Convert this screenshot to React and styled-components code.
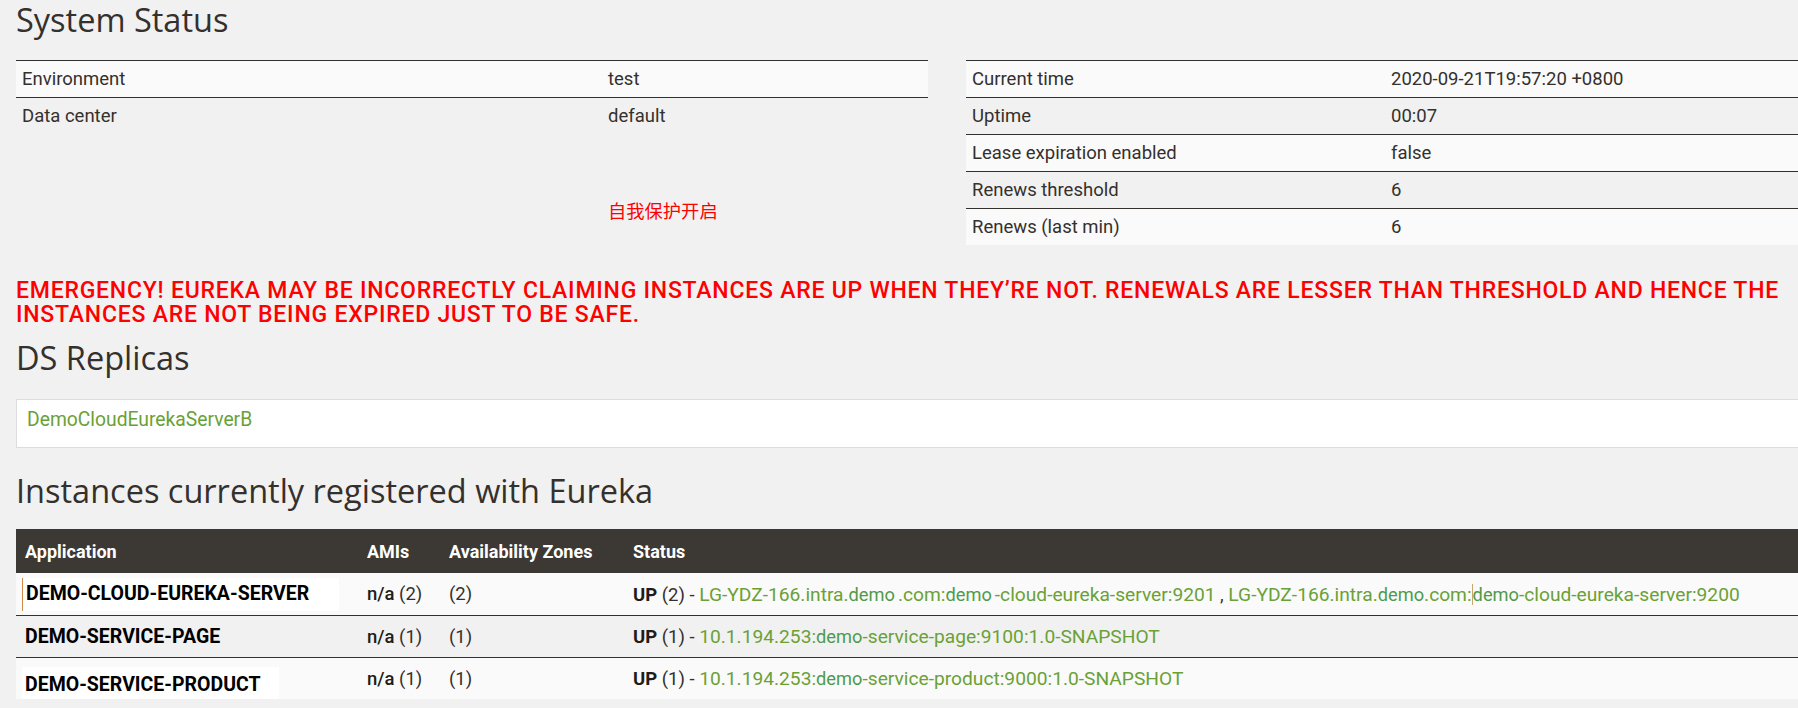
import React from "react"
import styled, { createGlobalStyle } from "styled-components"

const C = {
	page: "#f1f1f1",
	stripe: "#fafafa",
	text: "#34302d",
	head: "#3c3834",
	line: "#34302d",
	link: "#6aa136",
	red: "#ff0000",
}

const GlobalStyle = createGlobalStyle`
	html, body {
		margin: 0;
		padding: 0;
		background: ${C.page};
		overflow: hidden;
	}
	body {
		font-family: Roboto, "Liberation Sans", sans-serif;
		font-size: 18.5px;
		color: ${C.text};
	}
`

const Page = styled.div`
	padding: 3px 0 0 16px;
`

const Heading = styled.h2`
	margin: ${p => p.$top || 0}px 0 ${p => p.$bottom || 0}px 0;
	font-family: "Open Sans", "Liberation Sans", sans-serif;
	font-size: 32.5px;
	font-weight: 400;
	line-height: 34px;
	color: ${C.text};
`

const StatusGrid = styled.div`
	display: grid;
	grid-template-columns: 912px 1fr;
	column-gap: 38px;
	align-items: start;
`

const InfoTable = styled.div`
	display: flex;
	flex-direction: column;
`

const InfoRow = styled.div`
	display: grid;
	grid-template-columns: ${p => p.$label}px 1fr;
	align-items: center;
	height: 37px;
	box-sizing: border-box;
	border-top: 1px solid ${C.line};
	&:nth-child(odd) {
		background: ${C.stripe};
	}
`

const Cell = styled.div`
	padding: 0 6px;
	white-space: nowrap;
`

const Protect = styled.div`
	margin-top: 64px;
	padding-left: 592px;
	font-family: "Noto Sans CJK SC", sans-serif;
	font-size: 18.3px;
	line-height: 24px;
	color: ${C.red};
`

const Emergency = styled.h4`
	margin: 34px 0 0 0;
	font-family: Roboto, "Liberation Sans", sans-serif;
	font-size: 23px;
	font-weight: 500;
	line-height: 24px;
	letter-spacing: 0.77px;
	text-transform: uppercase;
	white-space: nowrap;
	color: ${C.red};
`

const ReplicaBox = styled.div`
	background: #fff;
	border: 1px solid #dcdcdc;
	border-right: none;
	padding: 8px 10px 15px 10px;
	line-height: 24px;
`

const Link = styled.a`
	color: ${C.link};
	text-decoration: none;
	font-size: ${p => p.$size || "inherit"};
`

const Pasted = styled.span`
	font-size: 0.95em;
	color: #4f9a4a;
	margin-right: ${p => (p.$gap ? 3 : 0)}px;
	border-left: ${p => (p.$bar ? "1px solid #c9a66b" : "none")};
`

const InstTable = styled.div`
	display: flex;
	flex-direction: column;
`

const InstRow = styled.div`
	display: grid;
	grid-template-columns: 342px 82px 184px 1fr;
	align-items: center;
	box-sizing: border-box;
	height: 42px;
	border-top: 1px solid ${C.line};
	&:nth-child(even) {
		background: ${C.stripe};
	}
	&:nth-child(2) {
		border-top: none;
	}
`

const InstHead = styled(InstRow)`
	height: 44px;
	border-top: none;
	background: ${C.head};
	color: #fff;
	font-weight: 700;
	font-size: 18px;
`

const InstCell = styled.div`
	padding: 0 9px;
	white-space: nowrap;
`

const AppName = styled.span`
	display: inline-block;
	position: relative;
	top: ${p => p.$shift || 0}px;
	margin-left: -3px;
	padding: ${p => p.$pad || "0"};
	background: ${p => (p.$masked ? "#fff" : "transparent")};
	border-left: ${p => (p.$mark ? "1px solid #d08a4c" : "none")};
	font-size: 19.5px;
	font-weight: 700;
	color: #000;
	line-height: 24px;
`

const Strong = styled.b`
	font-weight: ${p => p.$weight || 700};
	color: #1f1c1a;
`

const left = [
	["Environment", "test"],
	["Data center", "default"],
]

const right = [
	["Current time", "2020-09-21T19:57:20 +0800"],
	["Uptime", "00:07"],
	["Lease expiration enabled", "false"],
	["Renews threshold", "6"],
	["Renews (last min)", "6"],
]

const App = () => (
	<Page>
		<GlobalStyle />
		<Heading $bottom={23}>System Status</Heading>
		<StatusGrid>
			<div>
				<InfoTable>
					{left.map(([k, v]) => (
						<InfoRow key={k} $label={586}>
							<Cell>{k}</Cell>
							<Cell>{v}</Cell>
						</InfoRow>
					))}
				</InfoTable>
				<Protect>自我保护开启</Protect>
			</div>
			<InfoTable>
				{right.map(([k, v]) => (
					<InfoRow key={k} $label={419}>
						<Cell>{k}</Cell>
						<Cell>{v}</Cell>
					</InfoRow>
				))}
			</InfoTable>
		</StatusGrid>

		<Emergency>
			Emergency! Eureka may be incorrectly claiming instances are up when they’re not. Renewals are lesser than threshold and hence the
			<br />
			instances are not being expired just to be safe.
		</Emergency>

		<Heading $top={14} $bottom={24}>DS Replicas</Heading>
		<ReplicaBox>
			<Link href="#" $size="19.3px">DemoCloudEurekaServerB</Link>
		</ReplicaBox>

		<Heading $top={26} $bottom={21}>Instances currently registered with Eureka</Heading>
		<InstTable>
			<InstHead>
				<InstCell>Application</InstCell>
				<InstCell>AMIs</InstCell>
				<InstCell>Availability Zones</InstCell>
				<InstCell>Status</InstCell>
			</InstHead>
			<InstRow>
				<InstCell>
					<AppName $masked $mark $pad="4px 30px 5px 3px">DEMO-CLOUD-EUREKA-SERVER</AppName>
				</InstCell>
				<InstCell><Strong $weight={500}>n/a</Strong> (2)</InstCell>
				<InstCell>(2)</InstCell>
				<InstCell>
					<Strong>UP</Strong> (2) -{" "}
					<Link href="#" $size="19.2px">LG-YDZ-166.intra.<Pasted $gap>demo</Pasted>.com:<Pasted $gap>demo</Pasted>-cloud-eureka-server:9201</Link>
					{" , "}
					<Link href="#" $size="19.2px">LG-YDZ-166.intra.<Pasted>demo</Pasted>.com:<Pasted $bar>demo</Pasted>-cloud-eureka-server:9200</Link>
				</InstCell>
			</InstRow>
			<InstRow>
				<InstCell>
					<AppName $pad="0 0 0 3px">DEMO-SERVICE-PAGE</AppName>
				</InstCell>
				<InstCell><Strong $weight={500}>n/a</Strong> (1)</InstCell>
				<InstCell>(1)</InstCell>
				<InstCell>
					<Strong>UP</Strong> (1) -{" "}
					<Link href="#" $size="19.2px">10.1.194.253:<Pasted>demo</Pasted>-service-page:9100:1.0-SNAPSHOT</Link>
				</InstCell>
			</InstRow>
			<InstRow>
				<InstCell>
					<AppName $masked $shift={6} $pad="6px 18px 6px 3px">DEMO-SERVICE-PRODUCT</AppName>
				</InstCell>
				<InstCell><Strong $weight={500}>n/a</Strong> (1)</InstCell>
				<InstCell>(1)</InstCell>
				<InstCell>
					<Strong>UP</Strong> (1) -{" "}
					<Link href="#" $size="19.2px">10.1.194.253:<Pasted>demo</Pasted>-service-product:9000:1.0-SNAPSHOT</Link>
				</InstCell>
			</InstRow>
		</InstTable>
	</Page>
)

export default App
